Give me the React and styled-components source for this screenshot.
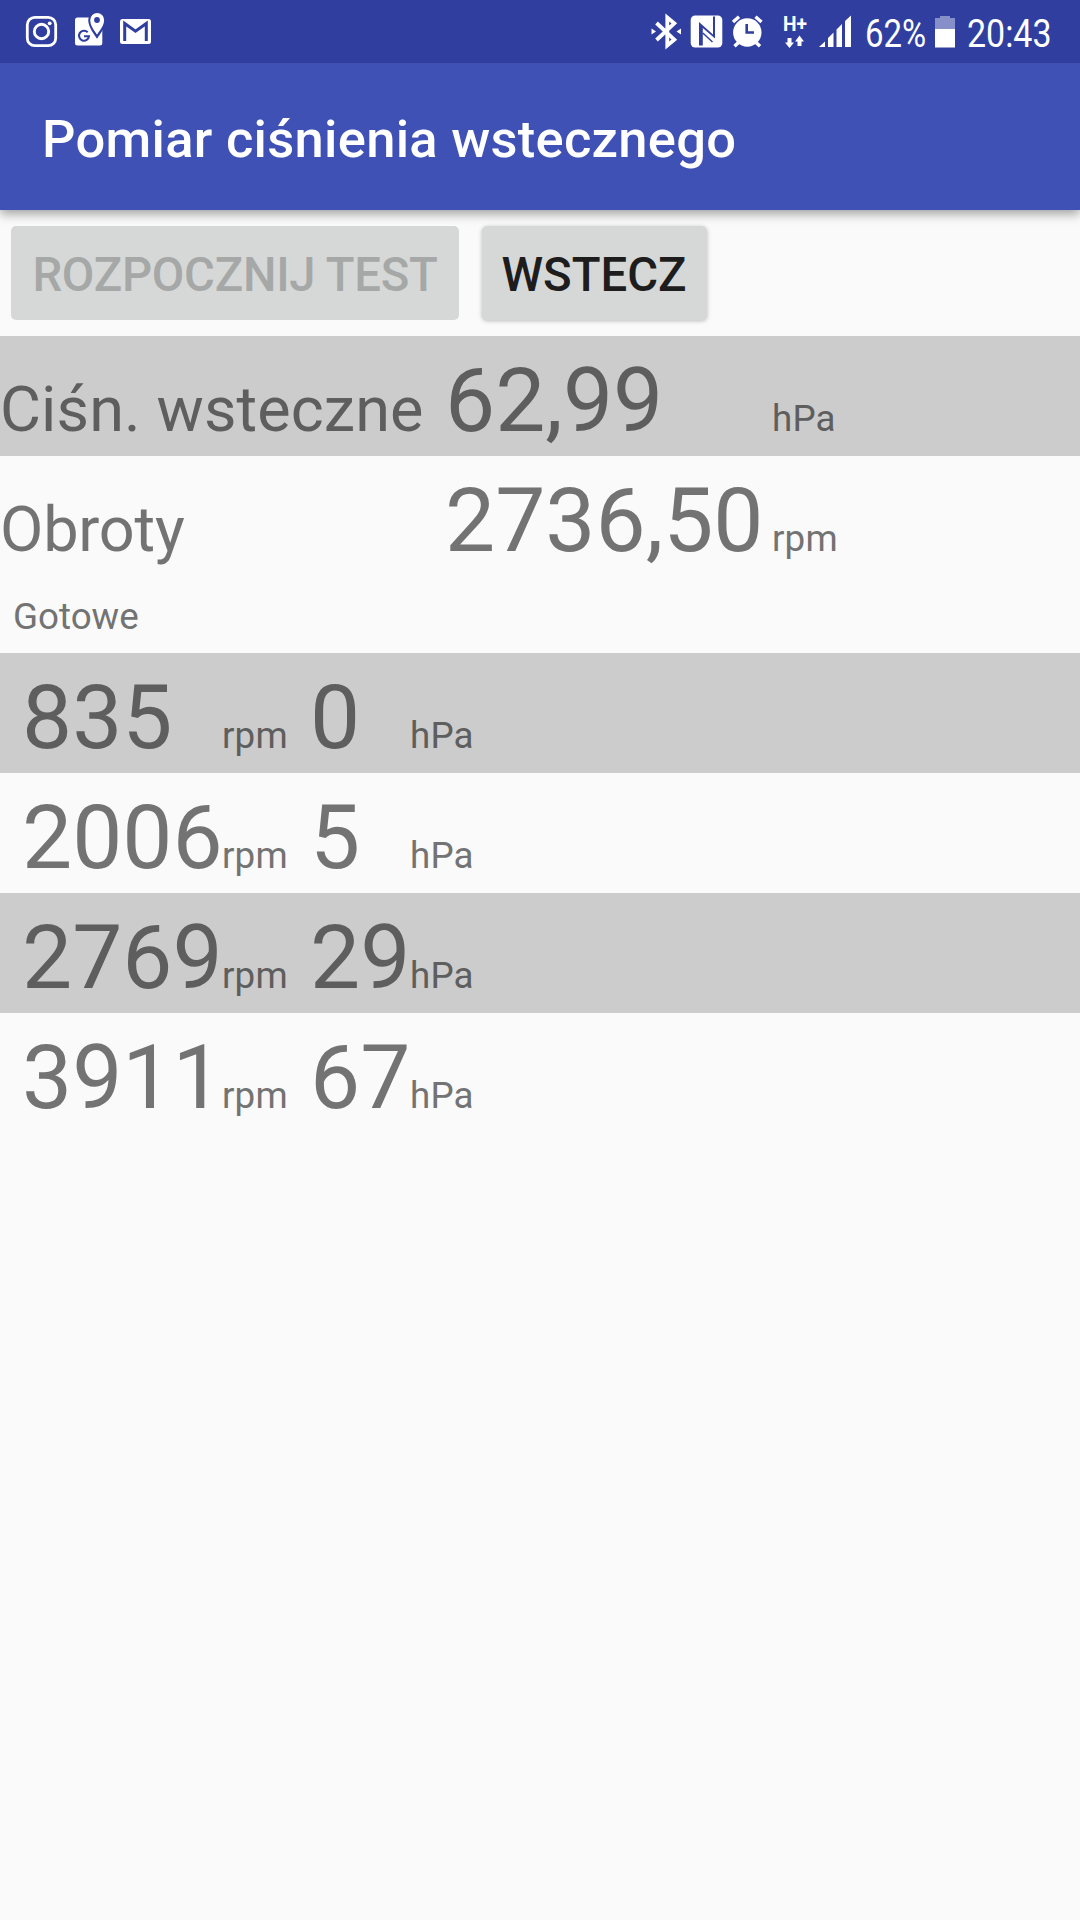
import React from 'react';
import styled, { createGlobalStyle } from 'styled-components';

const GlobalStyle = createGlobalStyle`
  body {
    margin: 0;
    background: #FAFAFA;
    font-family: Roboto, sans-serif;
  }
`
const Screen = styled.div`
  width: 1080px;
  height: 1920px;
  overflow: hidden;
  background: #FAFAFA;
`
const StatusBar = styled.div`
  display: flex;
  align-items: center;
  justify-content: space-between;
  height: 63px;
  background: #303F9F;
  color: white;
`
const StatusIcons = styled.svg`
  display: block;
  width: ${(props) => props.$width}px;
  height: 63px;
`
const StatusGroup = styled.div`
  display: flex;
  align-items: center;
  height: 63px;
`
const StatusText = styled.div`
  width: ${(props) => props.$width}px;
  margin-left: 5px;
  font-size: 39px;
  line-height: 46px;
  padding-top: 4px;
  white-space: nowrap;
  transform: scaleX(${(props) => props.$scale});
  transform-origin: left center;
`
const AppBar = styled.div`
  position: relative;
  display: flex;
  align-items: center;
  height: 147px;
  box-sizing: border-box;
  padding: 5px 0 0 42px;
  background: #3F51B5;
  box-shadow: 0 4px 10px rgba(0,0,0,0.36);
  clip-path: inset(0 0 -30px 0);
`
const Title = styled.div`
  font-size: 52.5px;
  font-weight: 500;
  line-height: 62px;
  letter-spacing: 0.28px;
  color: white;
`
const ButtonRow = styled.div`
  display: flex;
  gap: 22.5px;
  height: 126px;
  box-sizing: border-box;
  padding: 16px 11px;
`
const Button = styled.button`
  width: ${(props) => props.$width}px;
  height: 94px;
  border: none;
  border-radius: 5px;
  padding: 3px 0 0;
  background: #D6D8D7;
  font-family: inherit;
  font-size: 47.25px;
  font-weight: 500;
  line-height: 56px;
  white-space: nowrap;
  color: #1D1D1D;
  box-shadow: 0 1px 4px rgba(0,0,0,0.26);
  &:disabled {
    color: #A6A8A7;
    letter-spacing: -0.25px;
    box-shadow: none;
  }
`
const Row = styled.div`
  display: grid;
  grid-template-columns: ${(props) => props.$columns};
  align-items: baseline;
  height: 120px;
  box-sizing: border-box;
  padding-top: 9px;
  white-space: nowrap;
  background: ${(props) => (props.$shaded ? '#CCCCCC' : 'transparent')};
  color: ${(props) => (props.$shaded ? '#5E5E5E' : '#737373')};
`
const Label = styled.div`
  font-size: 63px;
  line-height: 80px;
  letter-spacing: ${(props) => props.$spacing}px;
`
const Value = styled.div`
  font-size: 89.25px;
  line-height: 111px;
`
const Unit = styled.div`
  font-size: 36.75px;
  line-height: 44px;
  letter-spacing: 0.15px;
`
const State = styled.div`
  height: 77px;
  box-sizing: border-box;
  padding: 19px 0 0 13px;
  font-size: 36.75px;
  line-height: 44px;
  color: #737373;
`

const readings = [
  { label: 'Ciśn. wsteczne', spacing: 0.1, value: '62,99', unit: 'hPa' },
  { label: 'Obroty', spacing: -0.2, value: '2736,50', unit: 'rpm' },
]

const results = [
  { rpm: '835', pressure: '0' },
  { rpm: '2006', pressure: '5' },
  { rpm: '2769', pressure: '29' },
  { rpm: '3911', pressure: '67' },
]

const Notifications = () => (
  <StatusIcons $width={160} viewBox="0 0 160 63" fill="none">
    <rect x="27.3" y="17.3" width="28.4" height="28.4" rx="7.5" stroke="white" strokeWidth="2.8" />
    <circle cx="41.5" cy="31.5" r="7.2" stroke="white" strokeWidth="2.9" />
    <circle cx="49.7" cy="23.3" r="1.9" fill="white" />
    <rect x="75" y="17.6" width="27.3" height="27.8" rx="2.5" fill="white" />
    <path d="M97 36.5C93.5 31.5 89.5 26.5 89.5 20.3a7.5 7.5 0 0 1 15 0C104.5 26.5 100.5 31.5 97 36.5z" fill="white" stroke="#303F9F" strokeWidth="2.6" />
    <path d="M97 34.5C94 30 90.3 26 90.3 20a6.9 6.9 0 0 1 13.8 0C104 26 100 30 97 34.5z" fill="white" />
    <circle cx="97" cy="20" r="2.9" fill="#303F9F" />
    <path d="M87.7 32.3a5 5 0 1 0 1.3 3.9h-5" stroke="#303F9F" strokeWidth="2.1" />
    <rect x="120" y="19" width="31" height="25" rx="2.5" fill="white" />
    <path d="M124.7 41V23.5L135.5 31.2L146.3 23.5V41" stroke="#303F9F" strokeWidth="3" />
  </StatusIcons>
)

const Indicators = () => (
  <StatusIcons $width={215} viewBox="645 0 215 63" fill="none">
    <path d="M656.5 23L674.3 39.7L667.3 45.5V17.5L674.3 23.3L656.5 40" stroke="white" strokeWidth="3.8" />
    <path d="M651.5 28.5L656 31.5L651.5 34.5zM681 28.5L676.500 31.5L681 34.5z" fill="white" />
    <rect x="690.7" y="15.5" width="31.6" height="32" rx="4.5" fill="white" />
    <path d="M699 17V22L713 34.500V16.500H715V38.500L702.800 28V45.500H699V17z" fill="#303F9F" />
    <path d="M702.800 33L712.500 42" stroke="#303F9F" strokeWidth="1.500" />
    <circle cx="747.3" cy="32.5" r="14.2" fill="white" />
    <path d="M733 22L739 16.7M755.5 16.7L761.5 22M734.5 46.3L739 42M755.5 42L760 46.3" stroke="white" strokeWidth="3.4" />
    <path d="M746.7 24V32.5H754" stroke="#303F9F" strokeWidth="2.6" />
    <text x="783" y="31.3" fill="white" fontSize="19.5" fontWeight="700" fontFamily="Roboto, sans-serif" textLength="24" lengthAdjust="spacingAndGlyphs">H+</text>
    <path d="M787.5 38H791.5V42.5H794L789.5 48L785 42.5H787.5zM797.5 46V41.5H795L799.5 35.5L804 41.5H801.5V46z" fill="white" />
    <path d="M819 47L825 41.5V47zM828 47V38L833.5 32.5V47zM836.5 47V29.5L842 24V47zM845 47V21L851 15.5V47z" fill="white" />
  </StatusIcons>
)

const Battery = () => (
  <StatusIcons $width={32} viewBox="930 0 32 63">
    <path d="M935 18H940V16H950V18H955V29H935z" fill="white" opacity="0.42" />
    <rect x="935" y="29" width="20" height="18.5" fill="white" />
  </StatusIcons>
)

const App = () => (
  <>
    <GlobalStyle />
    <Screen>
      <StatusBar>
        <Notifications />
        <StatusGroup>
          <Indicators />
          <StatusText $width={65} $scale={0.845}>62%</StatusText>
          <Battery />
          <StatusText $width={113} $scale={0.87}>20:43</StatusText>
        </StatusGroup>
      </StatusBar>
      <AppBar>
        <Title>Pomiar ciśnienia wstecznego</Title>
      </AppBar>
      <ButtonRow>
        <Button $width={448} disabled>ROZPOCZNIJ TEST</Button>
        <Button $width={225}>WSTECZ</Button>
      </ButtonRow>
      {readings.map((item, i) => (
        <Row key={item.label} $columns="445px 327px auto" $shaded={i % 2 === 0}>
          <Label $spacing={item.spacing}>{item.label}</Label>
          <Value>{item.value}</Value>
          <Unit>{item.unit}</Unit>
        </Row>
      ))}
      <State>Gotowe</State>
      {results.map((item, i) => (
        <Row key={item.rpm} $columns="22px 200px 88px 100px auto" $shaded={i % 2 === 0}>
          <span />
          <Value>{item.rpm}</Value>
          <Unit>rpm</Unit>
          <Value>{item.pressure}</Value>
          <Unit>hPa</Unit>
        </Row>
      ))}
    </Screen>
  </>
);

export default App;
